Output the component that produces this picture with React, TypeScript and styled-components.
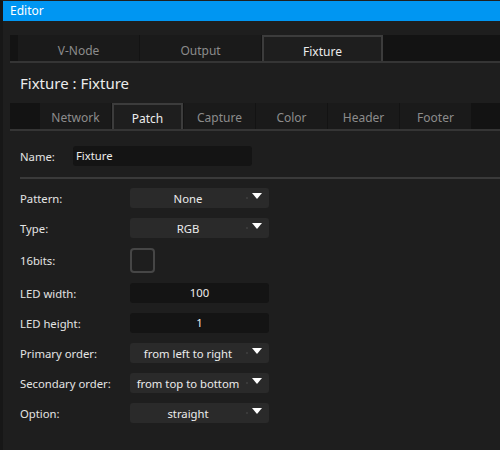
import React from "react";
import styled, { createGlobalStyle } from "styled-components";

const Global = createGlobalStyle`
  html, body { margin: 0; padding: 0; background: #1e1e1e; }
  body { font-family: "Noto Sans", "Open Sans", sans-serif; }
  * { box-sizing: border-box; }
`;

const Window = styled.div`
  width: 500px;
  height: 450px;
  background: #1e1e1e;
  border-left: 3px solid #171717;
  border-top: 1px solid #202020;
  display: flex;
  flex-direction: column;
  overflow: hidden;
`;

const TitleBar = styled.div`
  height: 20px;
  flex-shrink: 0;
  background: #0096f2;
  color: #ffffff;
  font-size: 12px;
  line-height: 20px;
  padding-left: 8px;
  margin-left: -1px;
`;

const Body = styled.div`
  flex: 1;
  padding: 14px 0 0 7px;
  display: flex;
  flex-direction: column;
`;

const TabBar = styled.div<{ $lead: number; $textShift: number }>`
  display: flex;
  align-items: flex-end;
  height: 28px;
  flex-shrink: 0;
  background: #131313;
  padding-left: ${(p) => p.$lead}px;
  border-bottom: 2px solid #353535;
  --shift: ${(p) => p.$textShift}px;
`;

const Tab = styled.div<{ $active?: boolean; $width: number }>`
  width: ${(p) => p.$width}px;
  height: 100%;
  display: flex;
  align-items: center;
  justify-content: center;
  font-size: 12px;
  margin-right: 1px;
  padding-top: var(--shift);
  background: ${(p) => (p.$active ? "#1e1e1e" : "#1a1a1a")};
  color: ${(p) => (p.$active ? "#ececec" : "#8c8c8c")};
  border: ${(p) => (p.$active ? "2px solid #3c3c3c" : "none")};
  border-bottom: none;
`;

const Heading = styled.div`
  height: 40px;
  flex-shrink: 0;
  display: flex;
  align-items: center;
  padding-left: 10px;
  padding-bottom: 1px;
  font-size: 15px;
  color: #ececec;
`;

const Form = styled.div`
  padding: 15px 0 0 10px;
  display: flex;
  flex-direction: column;
`;

const NameRow = styled.div`
  display: flex;
  align-items: center;
  height: 20px;
`;

const Separator = styled.div`
  height: 2px;
  background: #3a3a3a;
  margin: 11px 0 9px 0;
`;

const Rows = styled.div`
  display: flex;
  flex-direction: column;
  gap: 10px;
`;

const Row = styled.div<{ $h?: number }>`
  display: flex;
  align-items: center;
  height: ${(p) => p.$h ?? 20}px;
`;

const Label = styled.div<{ $width: number }>`
  width: ${(p) => p.$width}px;
  flex-shrink: 0;
  font-size: 11.3px;
  color: #e4e4e4;
`;

const TextInput = styled.div<{ $width: number; $center?: boolean }>`
  width: ${(p) => p.$width}px;
  height: 20px;
  background: #141414;
  border-radius: 3px;
  color: #ececec;
  font-size: 11.3px;
  line-height: 20px;
  padding-left: ${(p) => (p.$center ? 0 : 3)}px;
  text-align: ${(p) => (p.$center ? "center" : "left")};
`;

const Select = styled.div`
  width: 139px;
  height: 20px;
  background: #2a2a2a;
  border-radius: 3px;
  display: flex;
  align-items: center;
  color: #ececec;
  font-size: 11.3px;
`;

const SelectText = styled.div`
  flex: 1;
  text-align: center;
  white-space: nowrap;
  overflow: hidden;
`;

const Dot = styled.span`
  width: 2px;
  height: 2px;
  background: #3a3a3a;
  margin: 0 4px 0 0;
  flex-shrink: 0;
`;

const Arrow = styled.span`
  width: 0;
  height: 0;
  border-left: 5px solid transparent;
  border-right: 5px solid transparent;
  border-top: 6px solid #ffffff;
  margin: 0 7px 4px 0;
  flex-shrink: 0;
`;

const Checkbox = styled.div`
  width: 25px;
  height: 25px;
  border: 2px solid #464646;
  border-radius: 4px;
`;

const mainTabs = ["V-Node", "Output", "Fixture"];
const subTabs = ["Network", "Patch", "Capture", "Color", "Header", "Footer"];

const SelectBox = ({ value }: { value: string }) => (
  <Select>
    <SelectText>{value}</SelectText>
    <Dot />
    <Arrow />
  </Select>
);

export default function App() {
  return (
    <>
      <Global />
      <Window>
        <TitleBar>Editor</TitleBar>
        <Body>
          <TabBar $lead={8} $textShift={5}>
            {mainTabs.map((t) => (
              <Tab key={t} $width={121} $active={t === "Fixture"}>
                {t}
              </Tab>
            ))}
          </TabBar>
          <Heading>Fixture : Fixture</Heading>
          <TabBar $lead={30} $textShift={3}>
            {subTabs.map((t) => (
              <Tab key={t} $width={71} $active={t === "Patch"}>
                {t}
              </Tab>
            ))}
          </TabBar>
          <Form>
            <NameRow>
              <Label $width={53}>Name:</Label>
              <TextInput $width={179}>Fixture</TextInput>
            </NameRow>
            <Separator />
            <Rows>
              <Row>
                <Label $width={110}>Pattern:</Label>
                <SelectBox value="None" />
              </Row>
              <Row>
                <Label $width={110}>Type:</Label>
                <SelectBox value="RGB" />
              </Row>
              <Row $h={25}>
                <Label $width={110}>16bits:</Label>
                <Checkbox />
              </Row>
              <Row>
                <Label $width={110}>LED width:</Label>
                <TextInput $width={139} $center>
                  100
                </TextInput>
              </Row>
              <Row>
                <Label $width={110}>LED height:</Label>
                <TextInput $width={139} $center>
                  1
                </TextInput>
              </Row>
              <Row>
                <Label $width={110}>Primary order:</Label>
                <SelectBox value="from left to right" />
              </Row>
              <Row>
                <Label $width={110}>Secondary order:</Label>
                <SelectBox value="from top to bottom" />
              </Row>
              <Row>
                <Label $width={110}>Option:</Label>
                <SelectBox value="straight" />
              </Row>
            </Rows>
          </Form>
        </Body>
      </Window>
    </>
  );
}
